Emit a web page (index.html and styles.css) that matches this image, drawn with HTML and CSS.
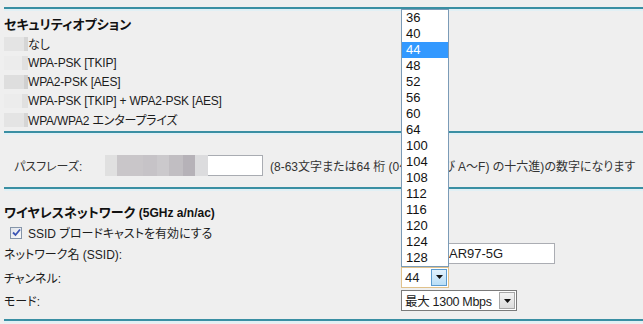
FILE: index.html
```
<html>
<head>
    <title>ワイヤレス設定</title>
    <link rel="stylesheet" href="styles.css">
</head>
<body>
    <div class="page">
        <div class="rule"></div>

        <!-- Security options -->
        <div class="block security">
            <h3>セキュリティオプション</h3>
            <ul class="options">
                <li><span class="blur b1"></span>なし</li>
                <li><span class="blur b2"></span>WPA-PSK [TKIP]</li>
                <li><span class="blur b3"></span>WPA2-PSK [AES]</li>
                <li><span class="blur b2"></span>WPA-PSK [TKIP] + WPA2-PSK [AES]</li>
                <li><span class="blur b1"></span>WPA/WPA2 エンタープライズ</li>
            </ul>
        </div>

        <div class="rule"></div>

        <!-- Passphrase -->
        <div class="block passphrase">
            <div class="pass-row">
                <span class="pass-label">パスフレーズ:</span>
                <span class="field"><span class="blur-text"></span></span>
                <span class="hint">(8-63文字または64 桁 (0～9 および A～F) の十六進)の数字になります</span>
            </div>
        </div>

        <div class="rule"></div>

        <!-- Wireless network 5GHz -->
        <div class="block wireless">
            <h3>ワイヤレスネットワーク <small>(5GHz a/n/ac)</small></h3>
            <div class="check">
                <span class="checkbox">
                    <svg width="9" height="9" viewBox="0 0 9 9"><path d="M1 4.5 L3.5 7 L8 1.5" fill="none" stroke="#3b55b5" stroke-width="1.8"/></svg>
                </span>
                SSID ブロードキャストを有効にする
            </div>
            <div class="form-grid">
                <span>ネットワーク名 (SSID):</span>
                <span class="text-input ssid">AR97-5G</span>

                <span>チャンネル:</span>
                <span class="select channel focused">
                    <span class="select-value">44</span>
                    <span class="select-arrow"><svg width="7" height="4" viewBox="0 0 7 4"><path d="M0 0 H7 L3.5 4 Z" fill="#111"/></svg></span>
                </span>

                <span>モード:</span>
                <span class="select mode">
                    <span class="select-value">最大 1300 Mbps</span>
                    <span class="select-arrow"><svg width="7" height="4" viewBox="0 0 7 4"><path d="M0 0 H7 L3.5 4 Z" fill="#111"/></svg></span>
                </span>
            </div>
        </div>

        <div class="rule"></div>

        <!-- Opened channel list -->
        <ul class="dropdown">
            <li>36</li>
            <li>40</li>
            <li class="selected">44</li>
            <li>48</li>
            <li>52</li>
            <li>56</li>
            <li>60</li>
            <li>64</li>
            <li>100</li>
            <li>104</li>
            <li>108</li>
            <li>112</li>
            <li>116</li>
            <li>120</li>
            <li>124</li>
            <li>128</li>
        </ul>
    </div>
</body>
</html>
```

FILE: styles.css
```
body, h3, ul, li {
    margin: 0;
    padding: 0;
    list-style: none;
    box-sizing: border-box;
}

body {
    font-family: 'Liberation Sans', 'Noto Sans CJK JP', sans-serif;
    font-size: 12px;
    font-feature-settings: "palt";
    color: #1c1c1c;
    background-color: #efefef;
}

.page {
    position: relative;
    padding: 7px 0 0 4px;
}

.rule {
    height: 2px;
    background-color: #3a8fa3;
    border-bottom: 2px solid #e1f0f5;
}

h3 {
    font-size: 13px;
    font-weight: bold;
    line-height: 19px;
    color: #111;
}

h3 small {
    font-size: 12px;
}

/* security options */
.security {
    padding: 4px 0 2px 0;
}

.options li {
    display: flex;
    align-items: center;
    height: 19px;
    letter-spacing: -0.2px;
}

.blur {
    width: 24px;
    height: 14px;
}

.b1 {
    background: linear-gradient(to right, #e4e4e4 0, #e4e4e4 20px, #d5d5d5 20px);
}

.b2 {
    background: linear-gradient(to right, #ececec 0, #ececec 18px, #e0e0e0 18px);
}

.b3 {
    background: linear-gradient(to right, #dedede 0, #dedede 20px, #cfcfcf 20px);
}

/* passphrase */
.passphrase {
    padding: 20px 0 11px 10px;
}

.pass-row {
    display: flex;
    align-items: center;
    height: 21px;
    white-space: nowrap;
}

.pass-label {
    width: 91px;
    color: #333;
}

.field {
    display: flex;
    width: 158px;
    height: 21px;
    box-sizing: border-box;
    border: 1px solid #a9acb2;
    background-color: #fff;
}

.blur-text {
    width: 103px;
    height: 21px;
    margin: -1px 0 -1px -1px;
    background: linear-gradient(to right,
        #e0e0e0 0, #e0e0e0 12px,
        #c9c6c9 12px, #c9c6c9 38px,
        #c6c3c7 38px, #c6c3c7 52px,
        #cbc9cc 52px, #cbc9cc 64px,
        #c1bec2 64px, #c1bec2 78px,
        #b6b2b8 78px, #b6b2b8 90px,
        #dcdcde 90px);
}

.hint {
    margin-left: 7px;
    color: #333;
}

/* wireless */
.wireless {
    padding: 12px 0 7px 0;
}

.check {
    display: flex;
    align-items: center;
    height: 19px;
    padding-left: 6px;
}

.checkbox {
    display: flex;
    align-items: center;
    justify-content: center;
    width: 12px;
    height: 12px;
    box-sizing: border-box;
    margin-right: 6px;
    border: 1px solid #8595a9;
    background: linear-gradient(135deg, #dfe3ea, #fbfbfb);
}

.form-grid {
    display: grid;
    grid-template-columns: 397px auto;
    grid-template-rows: 23px 24px 23px;
    align-items: center;
}

.text-input {
    display: flex;
    align-items: center;
    width: 154px;
    height: 21px;
    box-sizing: border-box;
    border: 1px solid #abadb3;
    background-color: #fff;
    font-size: 13px;
    padding-left: 47px;
}

.select {
    display: flex;
    align-items: center;
    height: 21px;
    box-sizing: border-box;
    border: 1px solid #7a7a7a;
    background-color: #fff;
    font-size: 13px;
    padding: 1px;
}

.select-value {
    flex: 1;
    padding-left: 2px;
    white-space: nowrap;
    overflow: hidden;
}

.select-arrow {
    display: flex;
    align-items: center;
    justify-content: center;
    flex: none;
    width: 16px;
    height: 17px;
    box-sizing: border-box;
    border: 1px solid #a6a6a6;
    background: linear-gradient(#f3f3f3, #dcdcdc);
}

.channel {
    width: 48px;
}

.channel.focused {
    border-color: #e0c28c;
}

.channel .select-arrow {
    border-color: #5b9ccf;
    background: linear-gradient(#e2f2fd, #b9def6);
}

.mode {
    width: 116px;
    font-size: 12.5px;
    letter-spacing: -0.3px;
}

/* opened list */
.dropdown {
    position: absolute;
    top: 9px;
    left: 401px;
    width: 48px;
    border: 1px solid #7b9bb7;
    background-color: #fff;
}

.dropdown li {
    height: 16px;
    line-height: 16px;
    padding-left: 4px;
    font-size: 13px;
    color: #111;
}

.dropdown li.selected {
    background-color: #3399ff;
    color: #fff;
}
```
